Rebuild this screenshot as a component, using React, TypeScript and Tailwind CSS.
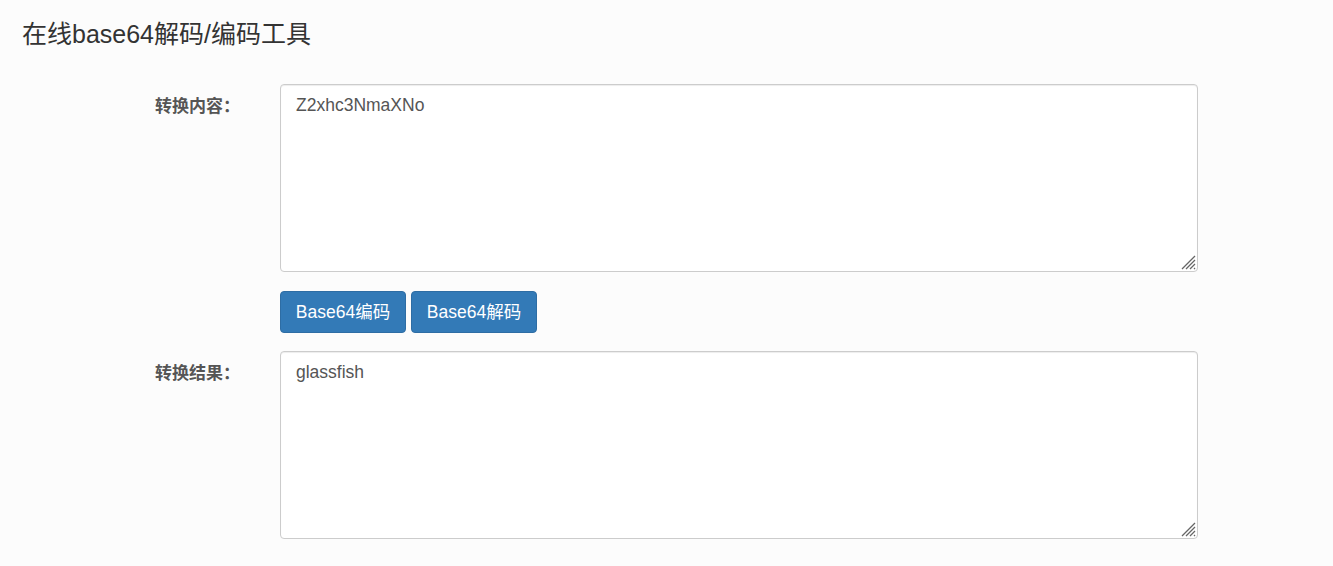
import React from "react";

const font = { fontFamily: '"Liberation Sans", "Noto Sans CJK SC", sans-serif' };

const Grip = () => (
  <svg className="pointer-events-none absolute right-[2px] bottom-[2px]" width="16" height="16" viewBox="0 0 16 16">
    <path d="M2 15 L15 2 M6 15 L15 6 M10 15 L15 10 M14 15 L15 14" stroke="#666" strokeWidth="1.3" />
  </svg>
);

const Field = ({ label, value }: { label: string; value: string }) => (
  <div className="flex items-start">
    <label className="w-[240px] shrink-0 pt-[11px] text-right text-[17px] leading-[24px] font-bold text-[#555]">
      {label}
    </label>
    <div className="relative ml-[40px]">
      <textarea
        className="block h-[188px] w-[918px] resize-none rounded-[4px] border border-[#ccc] bg-white px-[15px] py-[8px] text-[17.5px] leading-[24px] text-[#555] shadow-[inset_0_1px_1px_rgba(0,0,0,0.075)] outline-none"
        defaultValue={value}
        style={font}
      />
      <Grip />
    </div>
  </div>
);

export default function App() {
  return (
    <div className="min-h-[566px] w-full bg-[#fcfcfc] pt-[18px]" style={font}>
      <h1 className="pl-[22px] text-[25px] leading-[32px] text-[#333]">在线base64解码/编码工具</h1>
      <div className="mt-[34px] flex flex-col">
        <Field label="转换内容：" value="Z2xhc3NmaXNo" />
        <div className="ml-[280px] mt-[19px] mb-[18px] flex gap-[5px]">
          <button className="h-[42px] w-[126px] rounded-[4px] border border-[#2e6da4] bg-[#337ab7] text-[17.5px] text-white">
            Base64编码
          </button>
          <button className="h-[42px] w-[126px] rounded-[4px] border border-[#2e6da4] bg-[#337ab7] text-[17.5px] text-white">
            Base64解码
          </button>
        </div>
        <Field label="转换结果：" value="glassfish" />
      </div>
    </div>
  );
}
